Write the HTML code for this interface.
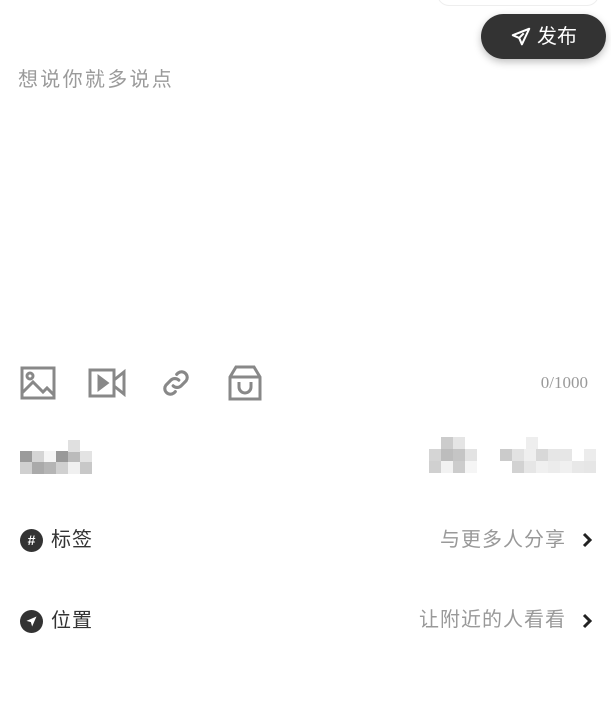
<!DOCTYPE html>
<html><head><meta charset="utf-8"><style>
body{margin:0;width:611px;height:714px;background:#fff;position:relative;overflow:hidden;font-family:"Liberation Sans","Noto Sans CJK SC",sans-serif}
.a{position:absolute}
.px{position:absolute;width:12px;height:12px}
</style></head><body>
<div class="a" style="left:437px;top:-20px;width:160px;height:24px;border:1px solid #eee;border-radius:12px"></div>
<div class="a" style="left:481px;top:14px;width:125px;height:45px;border-radius:23px;background:#333;box-shadow:0 3px 8px rgba(0,0,0,.25)"></div>
<svg class="a" style="left:510px;top:26px" width="22" height="22" viewBox="0 0 24 24" fill="none" stroke="#fff" stroke-width="2.2" stroke-linejoin="round"><path d="M21 3L3 10l7 3 3 7z M10 13l5-5"/></svg>
<div class="a" style="left:537px;top:23px;font-size:20px;color:#fff;line-height:28px">发布</div>
<div class="a" style="left:18px;top:66px;font-size:20px;letter-spacing:2.3px;color:#9a9a9a;line-height:28px">想说你就多说点</div>

<svg class="a" style="left:20px;top:366px" width="36" height="34" viewBox="0 0 36 34" fill="none" stroke="#888" stroke-width="3"><rect x="2" y="2" width="32" height="30"/><circle cx="10" cy="10" r="3"/><path d="M2 27l11-11 10 10 4-4 7 7"/></svg>
<svg class="a" style="left:88px;top:368px" width="38" height="30" viewBox="0 0 38 30" fill="none" stroke="#888" stroke-width="3"><rect x="2" y="2" width="24" height="26"/><path d="M11 9v12l8-6z" fill="#888"/><path d="M26 12l10-8v22l-10-8"/></svg>
<svg class="a" style="left:159px;top:366px" width="34" height="34" viewBox="0 0 24 24" fill="none" stroke="#888" stroke-width="2.2" stroke-linecap="round"><path d="M10 14a4 4 0 0 0 5.6 0l3.5-3.5a4 4 0 0 0-5.6-5.6l-1 1M14 10a4 4 0 0 0-5.6 0l-3.5 3.5a4 4 0 0 0 5.6 5.6l1-1"/></svg>
<svg class="a" style="left:228px;top:365px" width="34" height="36" viewBox="0 0 34 36" fill="none" stroke="#888" stroke-width="3"><path d="M2 12L8 2h18l6 10v22H2z M2 12h30"/><path d="M11 17v5a6 6 0 0 0 12 0v-5"/></svg>
<div class="a" style="right:23px;top:373px;font-family:'Liberation Serif',serif;font-size:17px;color:#999">0/1000</div>

<div class="px" style="left:20px;top:451px;background:#9b9b9b"></div>
<div class="px" style="left:32px;top:451px;background:#d5d5d5"></div>
<div class="px" style="left:44px;top:451px;background:#f5f5f5"></div>
<div class="px" style="left:56px;top:451px;background:#999"></div>
<div class="px" style="left:68px;top:451px;background:#bbb"></div>
<div class="px" style="left:80px;top:451px;background:#e3e3e3"></div>
<div class="px" style="left:20px;top:462px;background:#d0d0d0"></div>
<div class="px" style="left:32px;top:462px;background:#aaa"></div>
<div class="px" style="left:44px;top:462px;background:#b5b5b5"></div>
<div class="px" style="left:56px;top:462px;background:#d0d0d0"></div>
<div class="px" style="left:68px;top:462px;background:#f0f0f0"></div>
<div class="px" style="left:80px;top:462px;background:#c8c8c8"></div>
<div class="px" style="left:68px;top:440px;background:#e0e0e0"></div>

<div class="px" style="left:441px;top:437px;background:#ccc"></div>
<div class="px" style="left:453px;top:437px;background:#e5e5e5"></div>
<div class="px" style="left:429px;top:449px;background:#d5d5d5"></div>
<div class="px" style="left:441px;top:449px;background:#bdbdbd"></div>
<div class="px" style="left:453px;top:449px;background:#c5c5c5"></div>
<div class="px" style="left:465px;top:449px;background:#e3e3e3"></div>
<div class="px" style="left:429px;top:461px;background:#d0d0d0"></div>
<div class="px" style="left:441px;top:461px;background:#f2f2f2"></div>
<div class="px" style="left:453px;top:461px;background:#ccc"></div>
<div class="px" style="left:465px;top:461px;background:#f5f5f5"></div>
<div class="px" style="left:526px;top:437px;background:#eee"></div>
<div class="px" style="left:500px;top:449px;background:#cbcbcb"></div>
<div class="px" style="left:512px;top:449px;background:#e2e2e2"></div>
<div class="px" style="left:524px;top:449px;background:#efefef"></div>
<div class="px" style="left:536px;top:449px;background:#d8d8d8"></div>
<div class="px" style="left:548px;top:449px;background:#e6e6e6"></div>
<div class="px" style="left:560px;top:449px;background:#e6e6e6"></div>
<div class="px" style="left:584px;top:449px;background:#ececec"></div>
<div class="px" style="left:512px;top:461px;background:#d2d2d2"></div>
<div class="px" style="left:524px;top:461px;background:#e6e6e6"></div>
<div class="px" style="left:536px;top:461px;background:#f0f0f0"></div>
<div class="px" style="left:548px;top:461px;background:#ececec"></div>
<div class="px" style="left:560px;top:461px;background:#f0f0f0"></div>
<div class="px" style="left:572px;top:461px;background:#e8e8e8"></div>
<div class="px" style="left:584px;top:461px;background:#e6e6e6"></div>

<div class="a" style="left:20px;top:529px;width:23px;height:23px;border-radius:50%;background:#333;color:#fff;font-size:14px;font-weight:bold;line-height:23px;text-align:center">#</div>
<div class="a" style="left:51px;top:526px;font-size:20px;letter-spacing:1px;color:#333;line-height:28px">标签</div>
<div class="a" style="right:45px;top:526px;font-size:20px;letter-spacing:1px;color:#999;line-height:28px">与更多人分享</div>
<svg class="a" style="left:581px;top:532px" width="12" height="16" viewBox="0 0 12 16" fill="none" stroke="#222" stroke-width="3"><path d="M3 2l6 6-6 6"/></svg>

<div class="a" style="left:20px;top:610px;width:23px;height:23px;border-radius:50%;background:#333"></div>
<svg class="a" style="left:24px;top:614px" width="15" height="15" viewBox="0 0 24 24" fill="#fff"><path d="M20 4L4 11l7 2 2 7z"/></svg>
<div class="a" style="left:51px;top:607px;font-size:20px;letter-spacing:1px;color:#333;line-height:28px">位置</div>
<div class="a" style="right:45px;top:606px;font-size:20px;letter-spacing:1px;color:#999;line-height:28px">让附近的人看看</div>
<svg class="a" style="left:581px;top:613px" width="12" height="16" viewBox="0 0 12 16" fill="none" stroke="#222" stroke-width="3"><path d="M3 2l6 6-6 6"/></svg>
</body></html>
